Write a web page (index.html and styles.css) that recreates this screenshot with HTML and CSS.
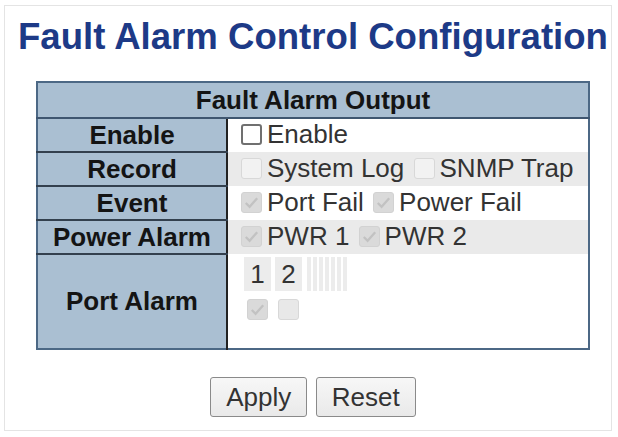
FILE: index.html
```html
<!DOCTYPE html>
<html lang="en">
<head>
    <meta charset="UTF-8">
    <meta name="viewport" content="width=device-width, initial-scale=1.0">
    <title>Fault Alarm Control Configuration</title>
    <link rel="stylesheet" href="styles.css">
</head>
<body>

<div class="page">
    <h1 class="page-title">Fault Alarm Control Configuration</h1>

    <table class="config">
        <tr>
            <th colspan="2" class="config-head">Fault Alarm Output</th>
        </tr>
        <tr>
            <td class="param">Enable</td>
            <td class="value">
                <label class="opt"><span class="cb"></span>Enable</label>
            </td>
        </tr>
        <tr class="alt">
            <td class="param">Record</td>
            <td class="value">
                <label class="opt"><span class="cb off"></span>System Log</label>
                <label class="opt"><span class="cb off"></span>SNMP Trap</label>
            </td>
        </tr>
        <tr>
            <td class="param">Event</td>
            <td class="value">
                <label class="opt"><span class="cb off on"><svg viewBox="0 0 20 20"><path d="M4 10.5l4 4 8-9"/></svg></span>Port Fail</label>
                <label class="opt"><span class="cb off on"><svg viewBox="0 0 20 20"><path d="M4 10.5l4 4 8-9"/></svg></span>Power Fail</label>
            </td>
        </tr>
        <tr class="alt">
            <td class="param">Power Alarm</td>
            <td class="value">
                <label class="opt"><span class="cb off on"><svg viewBox="0 0 20 20"><path d="M4 10.5l4 4 8-9"/></svg></span>PWR 1</label>
                <label class="opt"><span class="cb off on"><svg viewBox="0 0 20 20"><path d="M4 10.5l4 4 8-9"/></svg></span>PWR 2</label>
            </td>
        </tr>
        <tr>
            <td class="param port-param">Port Alarm</td>
            <td class="value port-value">
                <div class="ports">
                    <div class="port-nums">
                        <span class="port-no">1</span>
                        <span class="port-no">2</span>
                        <span class="port-rest">
                            <i></i><i></i><i></i><i></i><i></i><i></i><i></i>
                        </span>
                    </div>
                    <div class="port-checks">
                        <span class="port-cell"><span class="cb off on"><svg viewBox="0 0 20 20"><path d="M4 10.5l4 4 8-9"/></svg></span></span>
                        <span class="port-cell"><span class="cb off"></span></span>
                    </div>
                </div>
            </td>
        </tr>
    </table>

    <div class="actions">
        <button class="btn">Apply</button>
        <button class="btn">Reset</button>
    </div>
</div>

</body>
</html>
```

FILE: styles.css
```css
body {
    margin: 0;
    background-color: #fff;
    font-family: "Liberation Sans", Arial, sans-serif;
    color: #333;
}
.page {
    margin: 5px 6px 0 4px;
    padding-bottom: 13px;
    border: 1px solid #e4e4e4;
}
.page-title {
    margin: 10px 0 0 13px;
    font-size: 36.6px;
    line-height: 41px;
    font-weight: bold;
    color: #1d3a87;
}
.config {
    margin: 24px 0 0 31px;
    width: 554px;
    border-collapse: collapse;
    border: 2px solid #4c6885;
    font-size: 26px;
}
.config td, .config th {
    padding: 0;
}
.config-head {
    height: 34px;
    background-color: #aabfd2;
    border-bottom: 2px solid #3f5670;
    color: #141414;
    font-weight: bold;
    text-align: center;
}
.param {
    width: 188px;
    height: 32px;
    background-color: #aabfd2;
    border-right: 2px solid #222;
    border-bottom: 2px solid #33404e;
    color: #141414;
    font-weight: bold;
    text-align: center;
}
.port-param {
    height: 93px;
    border-bottom: none;
}
.value {
    padding-left: 13px !important;
    background-color: #fff;
    white-space: nowrap;
}
.alt .value {
    background-color: #eaeaea;
}
.opt {
    display: inline-flex;
    align-items: center;
    margin-right: 2px;
}
.cb {
    box-sizing: border-box;
    display: inline-block;
    width: 21px;
    height: 21px;
    margin-right: 5px;
    border: 2px solid #707070;
    border-radius: 3px;
    background-color: #fff;
}
.cb.off {
    border: 1px solid #d8d8d8;
    background-color: #e8e8e8;
}
.cb.on {
    background-color: #dadada;
    border-color: #d2d2d2;
}
.cb svg {
    display: block;
    width: 100%;
    height: 100%;
    fill: none;
    stroke: #c2c2c2;
    stroke-width: 2.4;
}
.alt .cb.off:not(.on) {
    background-color: #f2f2f2;
}
.port-value {
    vertical-align: top;
}
.ports {
    padding: 3px 0 0 3px;
}
.port-nums {
    display: flex;
    gap: 4px;
    height: 34px;
}
.port-no {
    width: 27px;
    background-color: #ececec;
    text-align: center;
    line-height: 34px;
}
.port-rest {
    display: flex;
    gap: 2px;
    margin-left: 1px;
}
.port-rest i {
    width: 4px;
    background-color: #ececec;
}
.port-checks {
    display: flex;
    gap: 4px;
    margin-top: 8px;
}
.port-cell {
    width: 27px;
    display: flex;
    justify-content: center;
}
.port-cell .cb {
    margin-right: 0;
}
.actions {
    width: 554px;
    margin: 27px 0 0 31px;
    text-align: center;
}
.btn {
    height: 40px;
    padding: 0 15px;
    margin: 0 2px;
    font-family: "Liberation Sans", Arial, sans-serif;
    font-size: 26px;
    color: #333;
    background: linear-gradient(#f7f7f7, #e9e9e9);
    border: 1px solid #8a8a8a;
    border-radius: 3px;
}
```
